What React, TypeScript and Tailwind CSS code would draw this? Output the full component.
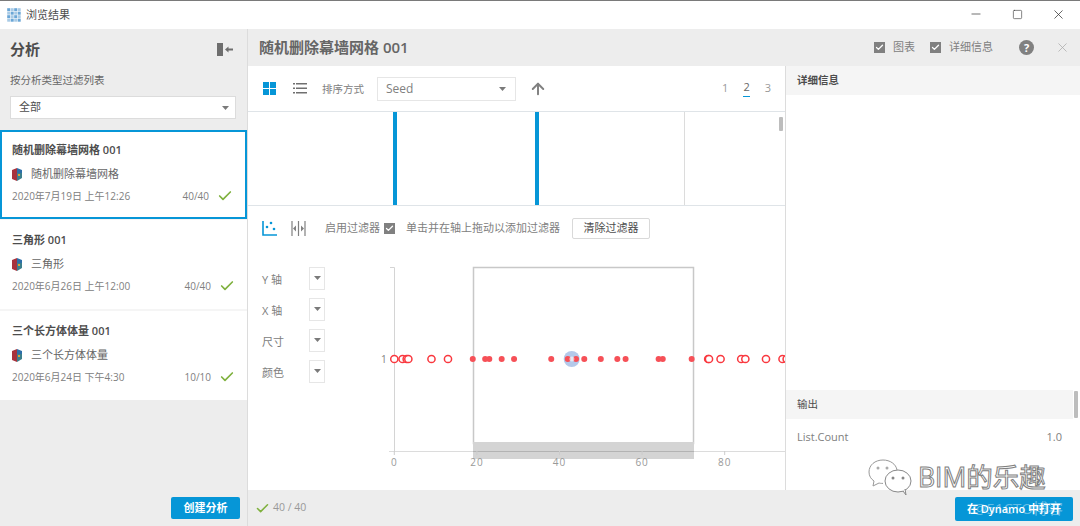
import { ArrowUp, Check, Minus, Square, X } from "lucide-react";

const font = { fontFamily: '"Open Sans", "Noto Sans CJK SC", sans-serif' };

const analyses = [
  { title: "随机删除幕墙网格 001", type: "随机删除幕墙网格", date: "2020年7月19日 上午12:26", count: "40/40", active: true },
  { title: "三角形 001", type: "三角形", date: "2020年6月26日 上午12:00", count: "40/40", active: false },
  { title: "三个长方体体量 001", type: "三个长方体体量", date: "2020年6月24日 下午4:30", count: "10/10", active: false },
];

const hollow = [0, 2, 3, 3.4, 9, 13, 76, 76.2, 79, 84, 85, 90, 94, 95];
// 23 and 65 sit behind their neighbours, so draw them first
const filled = [23, 65, 19, 22, 26, 29, 38, 42, 44, 46, 50, 54, 56, 64, 72];

// chart svg starts at x=375, y=262
const px = (v: number) => 19.3 + v * 4.13;

function Caret() {
  return (
    <svg width="7" height="4" viewBox="0 0 7 4">
      <path d="M0 0h7L3.5 4z" fill="#7a7a7a" />
    </svg>
  );
}

function StackIcon() {
  return (
    <svg width="10" height="13" viewBox="0 0 10 13">
      <path d="M0 2l5-2v13l-5-2z" fill="#a8323c" />
      <path d="M5 0l5 2v3H5z" fill="#2d6fa8" />
      <path d="M5 5h5v5l-5 3z" fill="#3c7f8c" />
      <rect x="6" y="6" width="2" height="2" fill="#d9a23a" />
    </svg>
  );
}

function Tick() {
  return (
    <span className="flex h-[11px] w-[11px] items-center justify-center bg-[#808080]">
      <Check size={9} color="#ffffff" strokeWidth={3.5} />
    </span>
  );
}

function AppIcon() {
  const cells = [0, 1, 2, 3];
  return (
    <svg width="14" height="14" viewBox="0 0 14 14">
      {cells.map((r) =>
        cells.map((c) => (
          <rect
            key={`${r}-${c}`}
            x={c * 3.5 + 0.2}
            y={r * 3.5 + 0.2}
            width="3"
            height="3"
            fill={(r + c) % 2 ? "#a9cbe6" : "#6aa6d6"}
          />
        ))
      )}
    </svg>
  );
}

function Card({ item }: { item: (typeof analyses)[number] }) {
  return (
    <div
      className={`h-[89px] bg-white pl-3 pr-3 last:mt-[1px] ${
        item.active ? "border-2 border-[#0696d7] pl-[10px] pr-[12px] pt-[10px]" : "pt-3"
      }`}
    >
      <div className="text-[11px] leading-[16px] font-semibold text-[#4d4d4d]">{item.title}</div>
      <div className="mt-[8px] flex h-4 items-center gap-[9px] text-[11px] text-[#666666]">
        <StackIcon />
        <span>{item.type}</span>
      </div>
      <div className="mt-[6px] flex h-4 items-center text-[10px] text-[#808080]">
        <span className="flex-1">{item.date}</span>
        <span>{item.count}</span>
        <Check className="ml-2" size={16} color="#7fb13e" strokeWidth={2.5} />
      </div>
    </div>
  );
}

function AxisSelect({ label }: { label: string }) {
  return (
    <div className="flex h-[23px] justify-between">
      <span className="pt-[5px] text-[11px] leading-4 text-[#808080]">{label}</span>
      <span className="flex h-[23px] w-4 items-start justify-center border border-[#e6e6e6] bg-white pt-[8px]">
        <Caret />
      </span>
    </div>
  );
}

function Chart() {
  return (
    <svg width="410" height="228" viewBox="0 0 410 228">
      <path d="M15 5.5h4.500v184" fill="none" stroke="#d4d4d4" />
      <path d="M14 189.500h396" fill="none" stroke="#dcdcdc" />
      <rect x="98.500" y="5.500" width="220" height="176" fill="none" stroke="#c8c8c8" strokeWidth="1.500" />
      <rect x="98" y="180" width="221" height="17" fill="#d4d4d4" />
      <path d="M98 189.500h221" stroke="#b3b3b3" />
      {[0, 20, 40, 60, 80].map((v) => (
        <g key={v}>
          <path d={`M${px(v)} 189v4`} stroke="#cccccc" />
          <text x={px(v)} y="204" textAnchor="middle" fontSize="10" fill="#999999" letterSpacing="1">
            {v}
          </text>
        </g>
      ))}
      <text x="6" y="101" fontSize="10" fill="#808080">1</text>
      <circle cx="196.700" cy="97" r="8" fill="#b4c9ea" />
      {filled.map((v) => (
        <circle key={v} cx={px(v)} cy="97" r="3" fill="#f65057" />
      ))}
      <circle cx={px(43)} cy="97" r="2.500" fill="#ffffff" fillOpacity="0.6" />
      {hollow.map((v) => (
        <circle key={v} cx={px(v)} cy="97" r="3.600" fill="#ffffff" stroke="#f9383f" strokeWidth="1.500" />
      ))}
    </svg>
  );
}

export default function App() {
  return (
    <div className="relative flex h-[526px] w-[1080px] flex-col overflow-hidden bg-white" style={font}>
      {/* window title */}
      <div className="flex h-[29px] shrink-0 items-center border-t border-[#7a7a7a] bg-white pl-[7px]">
        <AppIcon />
        <span className="ml-[5px] text-[11px] text-[#4d4d4d]">浏览结果</span>
        <div className="ml-auto -mt-[2px] flex items-center text-[#333333]">
          <Minus className="mr-[29px]" size={14} strokeWidth={1.200} />
          <Square className="mr-[28px]" size={11} strokeWidth={1.300} />
          <X className="mr-[14px]" size={15} strokeWidth={1.200} />
        </div>
      </div>

      <div className="flex min-h-0 flex-1">
        {/* left panel */}
        <aside className="flex w-[247px] shrink-0 flex-col bg-[#ededed]">
          <div className="flex items-center justify-between pl-[10px] pr-[14px] pt-[8px]">
            <span className="text-[15px] leading-6 font-semibold text-[#4d4d4d]">分析</span>
            <svg width="16" height="13" viewBox="0 0 16 13">
              <rect width="6" height="13" fill="#6e6e6e" />
              <path d="M8 6.500l3.500-3v2H16v2h-4.500v2z" fill="#6e6e6e" />
            </svg>
          </div>
          <div className="mt-[11px] pl-[10px] text-[10.500px] leading-4 text-[#666666]">按分析类型过滤列表</div>
          <div className="mx-[10px] mt-2 flex h-[23px] w-[226px] items-center justify-between border border-[#dcdcdc] bg-white pl-2 pr-[6px] text-[11px] text-[#4d4d4d]">
            全部
            <Caret />
          </div>
          <div className="mt-[11px] flex flex-col gap-[1px] bg-[#f5f5f5]">
            {analyses.map((item) => (
              <Card key={item.title} item={item} />
            ))}
          </div>
          <div className="flex flex-1 items-end justify-end pb-[7px] pr-[7px]">
            <button className="h-[22px] w-[69px] rounded-[2px] bg-[#0696d7] text-[11px] font-semibold text-white">
              创建分析
            </button>
          </div>
        </aside>

        <div className="flex min-w-0 flex-1 flex-col border-l border-[#dcdcdc]">
          {/* main header */}
          <div className="flex h-[37px] shrink-0 items-center bg-[#ededed] pl-[11px] pr-[10px]">
            <span className="text-[15px] font-semibold text-[#666666]">随机删除幕墙网格 001</span>
            <div className="ml-auto flex items-center text-[11px] text-[#808080]">
              <Tick />
              <span className="ml-[8px]">图表</span>
              <span className="ml-[15px]">
                <Tick />
              </span>
              <span className="ml-[8px]">详细信息</span>
              <svg className="ml-[26px]" width="15" height="15" viewBox="0 0 15 15">
                <circle cx="7.500" cy="7.500" r="7.500" fill="#808080" />
                <text x="7.500" y="11.500" textAnchor="middle" fontSize="11" fontWeight="700" fill="#ffffff">?</text>
              </svg>
              <X className="ml-[21px]" size={15} color="#aaaaaa" strokeWidth={1.200} />
            </div>
          </div>

          <div className="flex min-h-0 flex-1">
            {/* center */}
            <main className="flex w-[537px] shrink-0 flex-col bg-white">
              <div className="flex h-[46px] shrink-0 items-center border-b border-[#dfe4e8] pl-[15px] pr-[14px]">
                <svg width="13" height="13" viewBox="0 0 13 13" fill="#0696d7">
                  <rect width="6" height="6" />
                  <rect x="7" width="6" height="6" />
                  <rect y="7" width="6" height="6" />
                  <rect x="7" y="7" width="6" height="6" />
                </svg>
                <svg className="ml-[17px]" width="14" height="11" viewBox="0 0 14 11" fill="#707070">
                  <rect width="2" height="1.500" />
                  <rect x="3" width="11" height="1.500" />
                  <rect y="4.500" width="2" height="1.500" />
                  <rect x="3" y="4.500" width="11" height="1.500" />
                  <rect y="9" width="2" height="1.500" />
                  <rect x="3" y="9" width="11" height="1.500" />
                </svg>
                <span className="ml-[15px] mt-[2px] text-[10.500px] text-[#808080]">排序方式</span>
                <div className="ml-[13px] flex h-[24px] w-[139px] items-center justify-between border border-[#e6e6e6] pl-2 pr-[9px] text-[12px] text-[#808080]">
                  Seed
                  <Caret />
                </div>
                <ArrowUp className="ml-[13px]" size={18} color="#808080" strokeWidth={2.600} />
                <div className="ml-auto flex gap-[15px] text-[11px] text-[#999999]">
                  <span>1</span>
                  <span className="border-b border-[#0696d7] leading-[13px] text-[#666666]">2</span>
                  <span>3</span>
                </div>
              </div>

              {/* thumbnails */}
              <div className="flex h-[94px] shrink-0 border-b border-[#dfe4e8]">
                <div className="w-[145px] border-r-4 border-[#0696d7] box-content" />
                <div className="w-[138px] border-r-4 border-[#0696d7] box-content" />
                <div className="w-[145px] border-r border-[#dcdcdc] box-content" />
                <div className="flex flex-1 justify-end pr-[2px] pt-[5px]">
                  <div className="h-[14px] w-[4px] rounded-[1px] bg-[#bdbdbd]" />
                </div>
              </div>

              {/* filter toolbar */}
              <div className="flex h-[40px] shrink-0 items-center pl-[14px] pt-[4px] text-[11px] text-[#808080]">
                <svg width="15" height="15" viewBox="0 0 15 15">
                  <path d="M1 0v14H15" fill="none" stroke="#0696d7" strokeWidth="1.600" />
                  <circle cx="5" cy="6" r="1.300" fill="#0696d7" />
                  <circle cx="9" cy="2" r="1.300" fill="#0696d7" />
                  <circle cx="12" cy="8" r="1.300" fill="#0696d7" />
                </svg>
                <svg className="ml-[14px]" width="15" height="15" viewBox="0 0 15 15">
                  <path d="M1 0v15M7.500 0v15M14 0v15" stroke="#808080" strokeWidth="1.200" />
                  <path d="M2 7.500l3-3v6zM13 7.500l-3-3v6z" fill="#808080" />
                </svg>
                <span className="ml-[19px] mt-[1px]">启用过滤器</span>
                <span className="ml-[4px]">
                  <Tick />
                </span>
                <span className="ml-[11px] mt-[1px]">单击并在轴上拖动以添加过滤器</span>
                <button className="ml-[12px] h-[21px] w-[78px] rounded-[2px] border border-[#d9d9d9] text-[11px] text-[#4d4d4d]">
                  清除过滤器
                </button>
              </div>

              <div className="flex min-h-0 flex-1">
                <div className="mt-[21px] flex w-[63px] flex-col gap-2 ml-[14px]">
                  <AxisSelect label="Y 轴" />
                  <AxisSelect label="X 轴" />
                  <AxisSelect label="尺寸" />
                  <AxisSelect label="颜色" />
                </div>
                <div className="ml-[50px] mt-[16px]">
                  <Chart />
                </div>
              </div>
            </main>

            {/* details */}
            <section className="flex min-w-0 flex-1 flex-col border-l border-[#dcdcdc] bg-white">
              <div className="flex h-[29px] shrink-0 items-center bg-[#f5f5f5] pl-[11px] text-[10.500px] font-semibold text-[#4d4d4d]">
                详细信息
              </div>
              <div className="h-[295px] shrink-0" />
              <div className="flex">
                <div className="flex-1">
                  <div className="flex h-[29px] items-center bg-[#f5f5f5] pl-[11px] text-[10.500px] text-[#4d4d4d]">
                    输出
                  </div>
                  <div className="flex h-[36px] items-center justify-between pl-[11px] pr-[11px] text-[11px] text-[#808080]">
                    <span>List.Count</span>
                    <span>1.0</span>
                  </div>
                </div>
                <div className="w-[7px] pl-[1px] pt-[1px]">
                  <div className="h-[27px] w-[4px] rounded-[1px] bg-[#bdbdbd]" />
                </div>
              </div>
            </section>
          </div>

          {/* footer */}
          <div className="flex h-[36px] shrink-0 items-center bg-[#ededed] pl-[7px] pr-[7px] text-[10.500px] text-[#999999]">
            <Check size={15} color="#7fb13e" strokeWidth={2.500} />
            <span className="ml-[3px]">40 / 40</span>
            <button className="ml-auto mt-[2px] h-[24px] w-[118px] rounded-[2px] bg-[#0696d7] text-[11px] font-semibold text-white">
              在 Dynamo 中打开
            </button>
          </div>
        </div>
      </div>

      {/* watermark */}
      <div className="absolute left-[867px] top-[458px] flex items-center">
        <svg width="46" height="38" viewBox="0 0 46 38">
          <path d="M16 2C8 2 2 7 2 14c0 4 2 7 5 9l-1 5 6-3c1 .300 2 .400 4 .400" fill="#ffffff" stroke="#999999" />
          <path d="M16 2c7 0 13 4 14 10" fill="none" stroke="#999999" />
          <ellipse cx="31" cy="23" rx="13" ry="11" fill="#ffffff" stroke="#888888" />
          <path d="M36 33l3 4-1-6" fill="#ffffff" stroke="#888888" />
          <circle cx="11" cy="10" r="1.500" fill="#aaaaaa" />
          <circle cx="20" cy="10" r="1.500" fill="#aaaaaa" />
          <circle cx="26" cy="20" r="1.500" fill="#888888" />
          <circle cx="36" cy="20" r="1.500" fill="#888888" />
        </svg>
        <span className="ml-[5px] text-[26.500px] leading-none text-white [-webkit-text-stroke:1px_#808080]">BIM的乐趣</span>
      </div>
      <div className="absolute left-[973px] top-[501px] text-[15px] leading-none text-white/40">@51CTO博客</div>
    </div>
  );
}
